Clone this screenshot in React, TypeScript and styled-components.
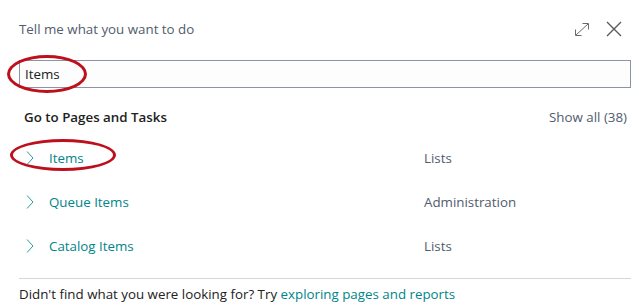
import React from "react";
import styled, { createGlobalStyle } from "styled-components";

const Global = createGlobalStyle`
  html, body { margin: 0; padding: 0; background: #ffffff; }
  body { font-family: "Segoe UI", "Open Sans", sans-serif; -webkit-font-smoothing: antialiased; }
  * { box-sizing: border-box; }
`;

const Dialog = styled.div`
  width: 639px;
  height: 308px;
  padding: 0 8px 0 19px;
  display: flex;
  flex-direction: column;
  font-size: 13.33px;
  color: #212121;
  overflow: hidden;
`;

const Header = styled.div`
  height: 60px;
  padding-bottom: 2px;
  display: flex;
  align-items: center;
  justify-content: space-between;
`;

const Title = styled.div`
  color: #505c6d;
  line-height: 18px;
`;

const HeaderActions = styled.div`
  display: flex;
  align-items: center;
  gap: 16px;
  padding-right: 9px;
`;

const IconButton = styled.button`
  border: 0;
  background: none;
  padding: 0;
  display: flex;
  cursor: pointer;
`;

const InputWrap = styled.div`
  position: relative;
`;

const SearchInput = styled.div`
  height: 28px;
  border: 1px solid #8a94a2;
  background: #fdfdfd;
  display: flex;
  align-items: center;
  padding-left: 5px;
  color: #212121;
`;

const Ring = styled.span<{ $l: number; $t: number; $w: number; $h: number }>`
  position: absolute;
  left: ${(p) => p.$l}px;
  top: ${(p) => p.$t}px;
  width: ${(p) => p.$w}px;
  height: ${(p) => p.$h}px;
  border: 3px solid #bd0f1c;
  border-radius: 50%;
  pointer-events: none;
`;

const SectionHeader = styled.div`
  height: 46px;
  padding: 20px 4px 0 5px;
  display: flex;
  justify-content: space-between;
  line-height: 18px;
`;

const SectionTitle = styled.div`
  font-weight: 600;
  color: #212121;
`;

const ShowAll = styled.div`
  color: #505c6d;
`;

const Row = styled.div`
  position: relative;
  height: 44px;
  padding-top: 4px;
  display: grid;
  grid-template-columns: 405px 1fr;
  align-items: center;
`;

const RowMain = styled.div`
  display: flex;
  align-items: center;
  padding-left: 7px;
`;

const Chevron = styled.svg`
  width: 8px;
  height: 14px;
  margin-right: 15px;
`;

const RowLink = styled.span`
  color: #00858a;
`;

const Category = styled.span`
  color: #505c6d;
`;

const Divider = styled.div`
  margin-top: 12px;
  height: 1px;
  background: #d6d6d6;
`;

const Footer = styled.div`
  padding-top: 6px;
  line-height: 18px;
  color: #212121;
`;

const Link = styled.a`
  color: #00858a;
  text-decoration: none;
`;

const rows = [
  { name: "Items", cat: "Lists", ring: true },
  { name: "Queue Items", cat: "Administration", ring: false },
  { name: "Catalog Items", cat: "Lists", ring: false },
];

export default function App() {
  return (
    <>
      <Global />
      <Dialog>
        <Header>
          <Title>Tell me what you want to do</Title>
          <HeaderActions>
            <IconButton aria-label="Expand">
              <svg width="16" height="15" viewBox="0 0 16 15" fill="none" stroke="#6a6a6a" strokeWidth="1">
                <path d="M2 13 L14 2" />
                <path d="M8.5 1.5 H14.5 V7.5" />
                <path d="M1.5 7.5 V13.5 H7.5" />
              </svg>
            </IconButton>
            <IconButton aria-label="Close">
              <svg width="16" height="16" viewBox="0 0 16 16" fill="none" stroke="#5a5a5a" strokeWidth="1.4">
                <path d="M1 1 L15 15 M15 1 L1 15" />
              </svg>
            </IconButton>
          </HeaderActions>
        </Header>
        <InputWrap>
          <SearchInput>Items</SearchInput>
          <Ring $l={-12} $t={-5} $w={80} $h={38} />
        </InputWrap>
        <SectionHeader>
          <SectionTitle>Go to Pages and Tasks</SectionTitle>
          <ShowAll>Show all (38)</ShowAll>
        </SectionHeader>
        {rows.map((r) => (
          <Row key={r.name}>
            <RowMain>
              <Chevron viewBox="0 0 8 14" fill="none" stroke="#2a9a9e" strokeWidth="1">
                <path d="M1 0.5 L7 7 L1 13.5" />
              </Chevron>
              <RowLink>{r.name}</RowLink>
            </RowMain>
            <Category>{r.cat}</Category>
            {r.ring && <Ring $l={-9} $t={5} $w={106} $h={32} />}
          </Row>
        ))}
        <Divider />
        <Footer>
          Didn't find what you were looking for? Try <Link>exploring pages and reports</Link>
        </Footer>
      </Dialog>
    </>
  );
}
